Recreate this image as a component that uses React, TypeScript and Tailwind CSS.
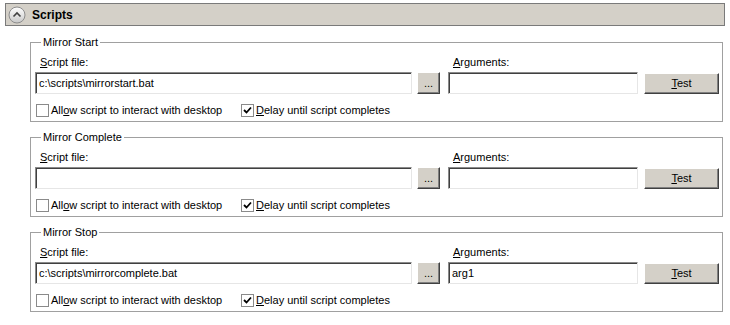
import React from 'react';

const font = { fontFamily: '"Liberation Sans", Tahoma, Arial, sans-serif' };

type Group = {
  title: string;
  scriptFile: string;
  args: string;
};

const groups: Group[] = [
  { title: 'Mirror Start', scriptFile: 'c:\\scripts\\mirrorstart.bat', args: '' },
  { title: 'Mirror Complete', scriptFile: '', args: '' },
  { title: 'Mirror Stop', scriptFile: 'c:\\scripts\\mirrorcomplete.bat', args: 'arg1' },
];

function Sunken({ value, className }: { value: string; className: string }) {
  return (
    <div
      className={`flex h-[22px] items-center border border-t-[#8a8a8a] border-l-[#8a8a8a] border-r-[#e6e6e6] border-b-[#e6e6e6] bg-white pl-[3px] text-[11px] text-black shadow-[inset_1px_1px_0_#404040] ${className}`}
    >
      {value}
    </div>
  );
}

function RaisedButton({ children, className }: { children: React.ReactNode; className: string }) {
  return (
    <button
      className={`flex items-center justify-center border border-t-white border-l-white border-r-[#404040] border-b-[#404040] bg-[#d4d0c8] text-[11px] text-black shadow-[inset_-1px_-1px_0_#808080] ${className}`}
    >
      {children}
    </button>
  );
}

function Checkbox({ checked }: { checked: boolean }) {
  return (
    <span className="flex h-[13px] w-[13px] items-center justify-center border border-[#8a8a8a] bg-white">
      {checked && (
        <svg width="9" height="9" viewBox="0 0 9 9">
          <path d="M1 4 L3.5 6.5 L8 1.5" stroke="#000" strokeWidth="1.8" fill="none" />
        </svg>
      )}
    </span>
  );
}

function ScriptGroup({ group }: { group: Group }) {
  return (
    <fieldset className="ml-[30px] mr-[7px] border border-[#a0a0a0] pb-[4px] pl-[4px]">
      <legend className="ml-[6px] px-[2px] text-[11px] leading-[13px] text-black">{group.title}</legend>
      <div className="flex pt-[7px] text-[11px] leading-[13px] text-black">
        <span className="ml-[5px] w-[413px]">
          <u>S</u>cript file:
        </span>
        <span>
          <u>A</u>rguments:
        </span>
      </div>
      <div className="mt-[3px] flex items-center">
        <Sunken value={group.scriptFile} className="w-[377px]" />
        <RaisedButton className="ml-[5px] h-[22px] w-[23px] leading-none">...</RaisedButton>
        <Sunken value={group.args} className="ml-[8px] w-[190px]" />
        <RaisedButton className="ml-[6px] h-[21px] w-[75px]">
          <span>
            <u>T</u>est
          </span>
        </RaisedButton>
      </div>
      <div className="mt-[10px] flex items-center text-[11px] leading-[13px] text-black">
        <span className="ml-[1px]">
          <Checkbox checked={false} />
        </span>
        <span className="ml-[2px] w-[190px]">
          All<u>o</u>w script to interact with desktop
        </span>
        <Checkbox checked />
        <span className="ml-[2px]">
          <u>D</u>elay until script completes
        </span>
      </div>
    </fieldset>
  );
}

export default function App() {
  return (
    <div className="h-[325px] w-[730px] bg-white pt-[3px]" style={font}>
      <div className="mx-[5px] flex h-[23px] items-center border border-[#7a7a7a] bg-[#d4d0c8] pl-[2px]">
        <svg width="18" height="18" viewBox="0 0 18 18">
          <defs>
            <linearGradient id="g" x1="0" y1="0" x2="0" y2="1">
              <stop offset="0" stopColor="#ffffff" />
              <stop offset="1" stopColor="#c8c8c8" />
            </linearGradient>
          </defs>
          <circle cx="9" cy="9" r="8" fill="url(#g)" stroke="#8c8c8c" />
          <path d="M5.5 10.5 L9 7 L12.5 10.5" stroke="#404040" strokeWidth="1.6" fill="none" />
        </svg>
        <span className="ml-[6px] text-[12px] font-bold text-black">Scripts</span>
      </div>
      <div className="mt-[10px] flex flex-col gap-[9px]">
        {groups.map((g) => (
          <ScriptGroup key={g.title} group={g} />
        ))}
      </div>
    </div>
  );
}
